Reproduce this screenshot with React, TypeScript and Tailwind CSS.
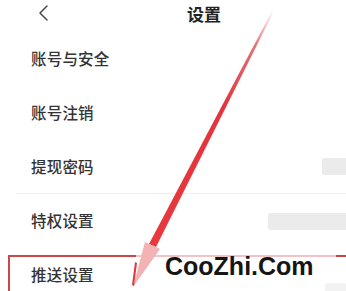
import React from 'react';

const rows = [
  { label: '账号与安全', bar: null, line: false },
  { label: '账号注销', bar: null, line: false },
  { label: '提现密码', bar: 'w-[24px]', line: true },
  { label: '特权设置', bar: 'w-[78px]', line: false },
  { label: '推送设置', bar: null, line: false },
];

export default function App() {
  return (
    <div className="relative w-[346px] h-[291px] overflow-hidden bg-white font-['Noto_Sans_CJK_SC',sans-serif] text-[#333]">
      {/* 顶部栏 */}
      <header className="relative h-[32px] flex items-start justify-center pt-[2px]">
        <svg className="absolute left-[37px] top-[5px]" width="12" height="16" viewBox="0 0 12 16">
          <path d="M10 1 L3 8 L10 15" fill="none" stroke="#4a4a4a" strokeWidth="1.5" strokeLinecap="round" strokeLinejoin="round" />
        </svg>
        <h1 className="text-[17px] font-bold leading-[24px] text-[#222] ml-[62px]">设置</h1>
      </header>

      {/* 设置列表 */}
      <div className="flex flex-col pl-[16px]">
        {rows.map((r) => (
          <div
            key={r.label}
            className={`h-[54px] flex items-center justify-between pl-[15px] ${
              r.line ? 'border-b border-[#efefef]' : ''
            }`}
          >
            <span className="text-[15.5px] font-medium leading-none tracking-[0.2px]">{r.label}</span>
            {r.bar && <div className={`${r.bar} h-[17px] bg-[#ebebeb] rounded-l-[2px]`} />}
          </div>
        ))}
      </div>

      {/* 标注 */}
      <svg className="absolute inset-0 pointer-events-none" width="346" height="291" viewBox="0 0 346 291">
        <defs>
          <linearGradient id="arr" x1="273" y1="10" x2="150" y2="250" gradientUnits="userSpaceOnUse">
            <stop offset="0" stopColor="#e23b40" stopOpacity="0" />
            <stop offset="0.15" stopColor="#d9333a" stopOpacity="0.7" />
            <stop offset="0.4" stopColor="#e3343b" />
            <stop offset="1" stopColor="#e8393f" />
          </linearGradient>
        </defs>
        <line x1="8" y1="256" x2="136" y2="256" stroke="#c9484c" strokeWidth="2" />
        <line x1="136" y1="256" x2="336" y2="256" stroke="#efc4c5" strokeWidth="2" />
        <line x1="336" y1="256" x2="346" y2="256" stroke="#c0484a" strokeWidth="2" />
        <line x1="9" y1="255" x2="9" y2="291" stroke="#c9484c" strokeWidth="2" />
        <polygon points="272.5,10 274,11 156,247 149,244" fill="url(#arr)" />
        <polygon points="145,242 160,249 133,287" fill="#f3b2b4" />
        <polygon points="135,262 137,263 134,286 132,285" fill="#df3a40" />
      </svg>

      <div className="absolute left-[165px] top-[254px] font-['Liberation_Sans',Arial,sans-serif] font-bold text-[25px] leading-none text-[#151515]">
        CooZhi.Com
      </div>
      <div className="absolute left-[325px] top-[283px] w-[21px] h-[10px] bg-[#f2f2f2] rounded-[2px]" />
    </div>
  );
}
